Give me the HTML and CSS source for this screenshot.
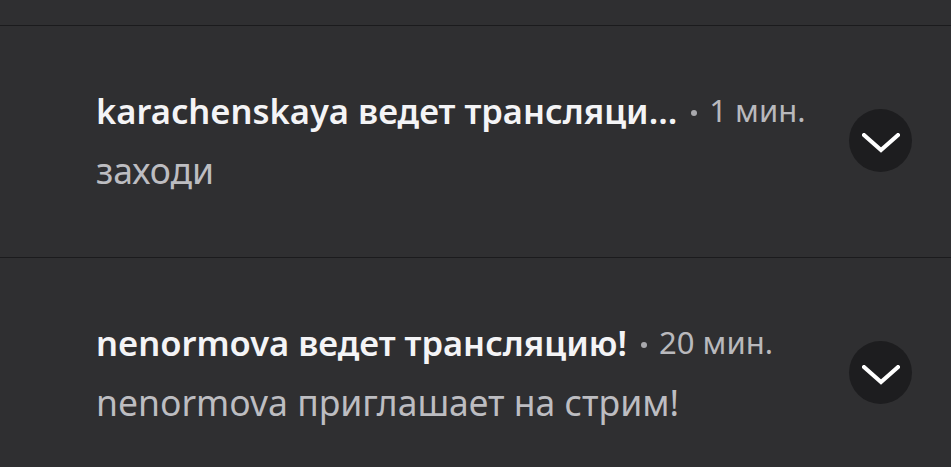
FILE: index.html
```html
<!DOCTYPE html>
<html lang="ru">
<head>
<meta charset="utf-8">
<link rel="stylesheet" href="styles.css">
</head>
<body>
<div class="list">
  <div class="prev"></div>
  <div class="item">
    <div class="text">
      <div class="head">
        <span class="title">karachenskaya ведет трансляци…</span>
        <span class="dot"></span>
        <span class="time">1 мин.</span>
      </div>
      <div class="body">заходи</div>
    </div>
    <button class="toggle" aria-label="Развернуть">
      <svg width="38" height="20" viewBox="0 0 38 20"><path d="M2 2 L19 17 L36 2" fill="none" stroke="#fff" stroke-width="4" stroke-linecap="square" stroke-linejoin="miter"/></svg>
    </button>
  </div>
  <div class="item">
    <div class="text">
      <div class="head">
        <span class="title">nenormova ведет трансляцию!</span>
        <span class="dot"></span>
        <span class="time">20 мин.</span>
      </div>
      <div class="body">nenormova приглашает на стрим!</div>
    </div>
    <button class="toggle" aria-label="Развернуть">
      <svg width="38" height="20" viewBox="0 0 38 20"><path d="M2 2 L19 17 L36 2" fill="none" stroke="#fff" stroke-width="4" stroke-linecap="square" stroke-linejoin="miter"/></svg>
    </button>
  </div>
</div>
</body>
</html>
```

FILE: styles.css
```css
html, body {
  margin: 0;
  padding: 0;
  background: #2f2f31;
  overflow: hidden;
}
body {
  font-family: "Noto Sans", "Open Sans", sans-serif;
}
.prev {
  height: 25px;
  border-bottom: 1px solid #1b1b1d;
}
.item {
  height: 231px;
  border-bottom: 1px solid #1b1b1d;
  display: flex;
  align-items: flex-start;
  padding: 0 39px 0 96px;
}
.text {
  flex: 1;
  padding-top: 62px;
}
.head {
  display: flex;
  align-items: center;
  height: 44px;
  white-space: nowrap;
}
.title {
  font-size: 34.5px;
  font-weight: 600;
  color: #f4f4f6;
}
.dot {
  width: 6px;
  height: 6px;
  border-radius: 50%;
  background: #a9a9ad;
  margin: 6px 12px 0 14px;
}
.time {
  font-size: 31px;
  color: #b9b9bd;
}
.body {
  font-size: 35.5px;
  color: #bdbdc1;
  margin-top: 15px;
  line-height: 46px;
}
.toggle {
  margin-top: 83px;
  width: 63px;
  height: 63px;
  border-radius: 50%;
  border: none;
  background: #1d1d1f;
  display: flex;
  align-items: center;
  justify-content: center;
  padding: 0;
  padding-top: 4px;
}
```
